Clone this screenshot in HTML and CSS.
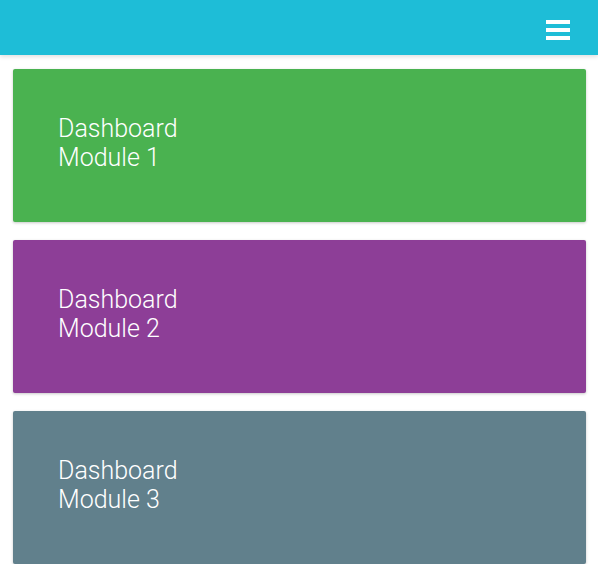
FILE: index.html
```html
<!DOCTYPE html>
<html>
<head>
<meta charset="utf-8">
<link rel="stylesheet" href="styles.css">
</head>
<body>
<header class="topbar">
  <button class="menu-btn" aria-label="Menu">
    <span class="bar"></span><span class="bar"></span><span class="bar"></span>
  </button>
</header>
<main class="modules">
  <section class="module module-green"><h2 class="module-title">Dashboard<br>Module 1</h2></section>
  <section class="module module-purple"><h2 class="module-title">Dashboard<br>Module 2</h2></section>
  <section class="module module-slate"><h2 class="module-title">Dashboard<br>Module 3</h2></section>
</main>
</body>
</html>
```
FILE: styles.css
```css
html, body {
  margin: 0;
  padding: 0;
  background: #ffffff;
  font-family: Roboto, "Liberation Sans", sans-serif;
}
.topbar {
  height: 55px;
  background: #1ebdd7;
  display: flex;
  justify-content: flex-end;
  align-items: center;
  padding-right: 28px;
  box-shadow: 0 2px 4px rgba(0,0,0,0.12);
  position: relative;
  z-index: 1;
}
.menu-btn {
  display: flex;
  flex-direction: column;
  gap: 4px;
  background: none;
  border: 0;
  padding: 0;
  margin-top: 5px;
}
.bar {
  display: block;
  width: 24px;
  height: 4px;
  background: #ffffff;
}
.modules {
  display: flex;
  flex-direction: column;
  gap: 18px;
  padding: 14px 12px 0 13px;
}
.module {
  height: 153px;
  border-radius: 2px;
  box-shadow: 0 1px 3px rgba(0,0,0,0.22);
  padding: 45px 45px 0;
  box-sizing: border-box;
}
.module-title {
  margin: 0;
  color: #ffffff;
  font-size: 25px;
  font-weight: 300;
  line-height: 29px;
}
.module-green { background: #4ab250; }
.module-purple { background: #8d3e97; }
.module-slate { background: #61808c; }
```
